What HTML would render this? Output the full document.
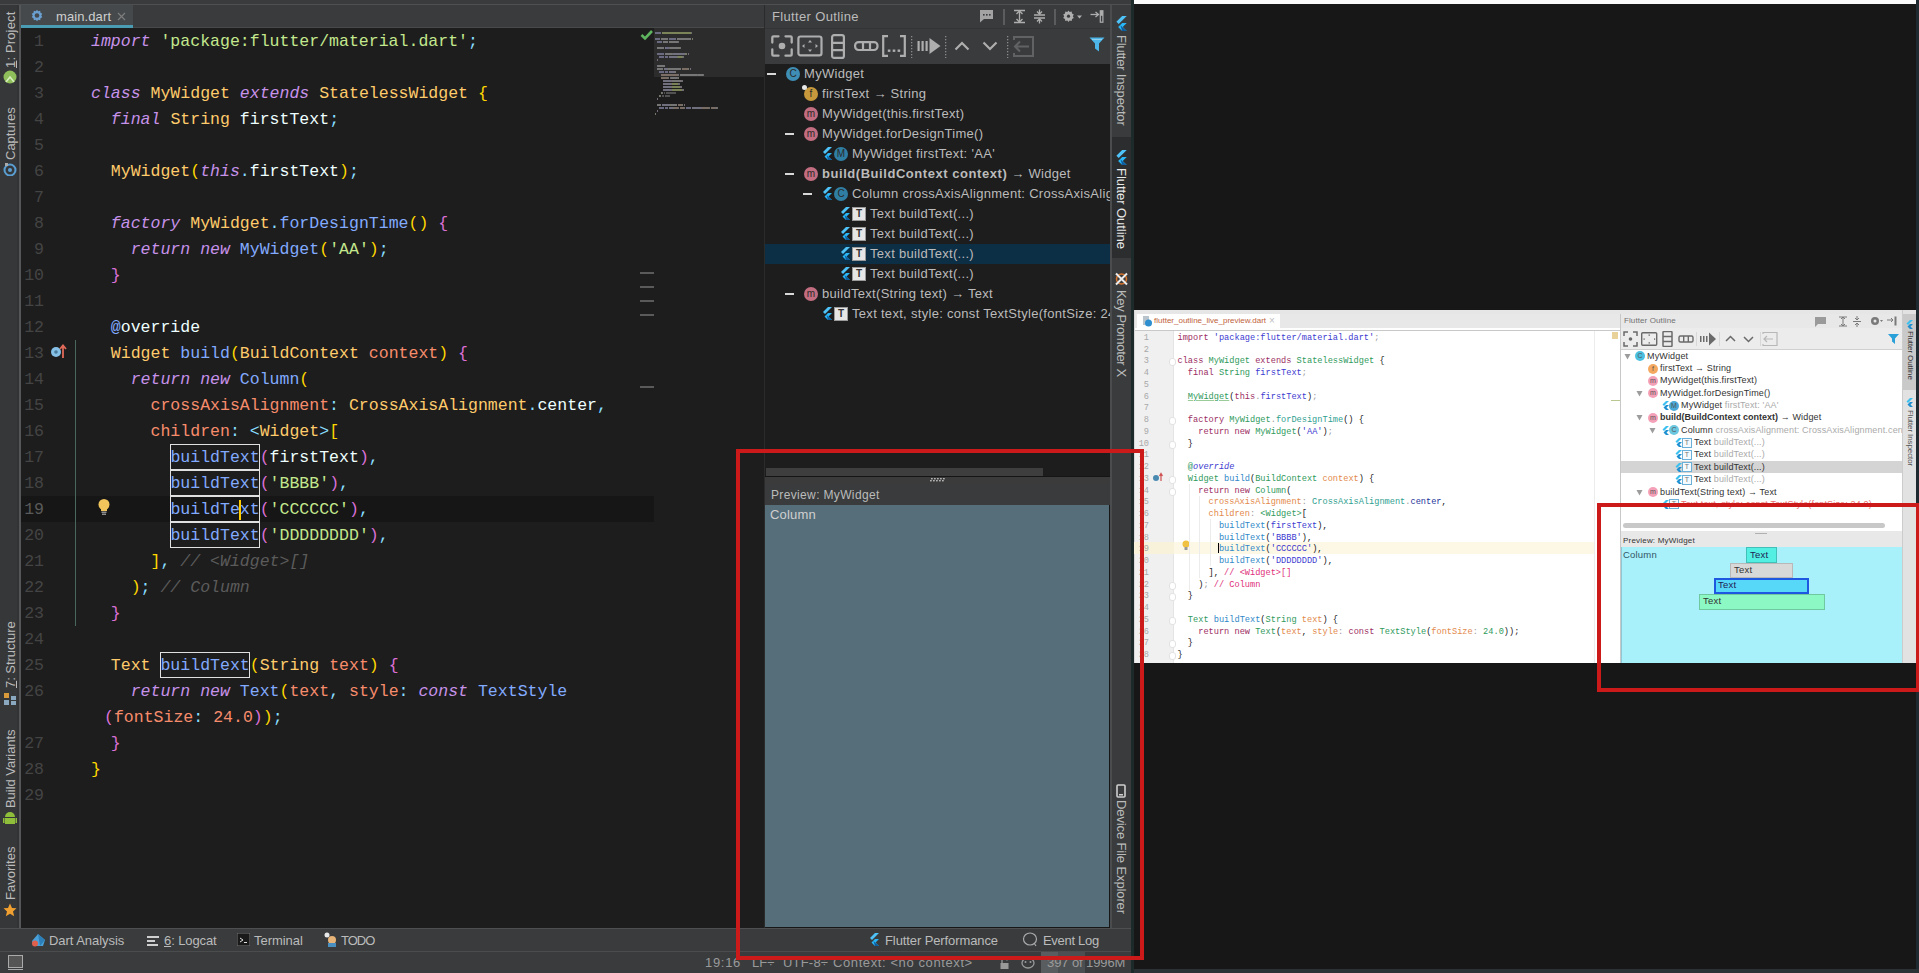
<!DOCTYPE html><html><head><meta charset="utf-8"><style>
*{margin:0;padding:0;box-sizing:border-box}
html,body{width:1919px;height:973px;overflow:hidden;background:#171717}
body{position:relative;font-family:"Liberation Sans",sans-serif}
div,svg{position:absolute}
.t{white-space:pre;line-height:1}
.code{font-family:"Liberation Mono",monospace;font-size:16.55px;line-height:26px;white-space:pre;color:#eeffff}
.k{color:#c792ea;font-style:italic}
.s{color:#c3e88d}
.p{color:#89ddff}
.c{color:#ffcb6b}
.f{color:#82aaff}
.o{color:#f78c6c}
.y{color:#ffd700}
.m{color:#da70d6}
.cm{color:#5b5b5b;font-style:italic}
.ln{font-family:"Liberation Mono",monospace;font-size:16.55px;line-height:26px;color:#444444;text-align:right;white-space:pre}
.ui{font-family:"Liberation Sans",sans-serif;white-space:pre;line-height:1}
</style></head><body><div style="left:0px;top:0px;width:1134px;height:4px;background:#393b3d;"></div>
<div style="left:0px;top:4px;width:1134px;height:1px;background:#4d5052;"></div>
<div style="left:0px;top:5px;width:19px;height:924px;background:#363739;"></div>
<div style="left:17px;top:5px;width:2px;height:924px;background:#323335;"></div>
<div style="left:19px;top:5px;width:2px;height:924px;background:#555657;"></div>
<div style="left:21px;top:5px;width:744px;height:23px;background:#393b3d;"></div>
<div style="left:21px;top:5px;width:112px;height:20px;background:#45494b;"></div>
<div style="left:21px;top:25px;width:112px;height:3px;background:#4a9cb3;"></div>
<div style="left:133px;top:27px;width:631px;height:1px;background:#47494b;"></div>
<div style="left:21px;top:28px;width:744px;height:901px;background:#1d1d1d;"></div>
<div style="left:654px;top:28px;width:110px;height:49px;background:#2c2c2c;"></div>
<div style="left:21px;top:496px;width:633px;height:26px;background:#161616;"></div>
<div class="code" style="left:91px;top:29px"><span class=k>import</span> <span class=s>'package:flutter/material.dart'</span><span class=p>;</span></div>
<div class="code" style="left:91px;top:55px"></div>
<div class="code" style="left:91px;top:81px"><span class=k>class</span> <span class=c>MyWidget</span> <span class=k>extends</span> <span class=c>StatelessWidget</span> <span class=y>{</span></div>
<div class="code" style="left:91px;top:107px">  <span class=k>final</span> <span class=c>String</span> firstText<span class=p>;</span></div>
<div class="code" style="left:91px;top:133px"></div>
<div class="code" style="left:91px;top:159px">  <span class=c>MyWidget</span><span class=y>(</span><span class=k>this</span><span class=p>.</span>firstText<span class=y>)</span><span class=p>;</span></div>
<div class="code" style="left:91px;top:185px"></div>
<div class="code" style="left:91px;top:211px">  <span class=k>factory</span> <span class=c>MyWidget</span><span class=p>.</span><span class=f>forDesignTime</span><span class=y>()</span> <span class=m>{</span></div>
<div class="code" style="left:91px;top:237px">    <span class=k>return</span> <span class=k>new</span> <span class=f>MyWidget</span><span class=y>(</span><span class=s>'AA'</span><span class=y>)</span><span class=p>;</span></div>
<div class="code" style="left:91px;top:263px">  <span class=m>}</span></div>
<div class="code" style="left:91px;top:289px"></div>
<div class="code" style="left:91px;top:315px">  <span class=f>@</span>override</div>
<div class="code" style="left:91px;top:341px">  <span class=c>Widget</span> <span class=f>build</span><span class=y>(</span><span class=c>BuildContext</span> <span class=o>context</span><span class=y>)</span> <span class=m>{</span></div>
<div class="code" style="left:91px;top:367px">    <span class=k>return</span> <span class=k>new</span> <span class=f>Column</span><span class=y>(</span></div>
<div class="code" style="left:91px;top:393px">      <span class=o>crossAxisAlignment</span><span class=p>:</span> <span class=c>CrossAxisAlignment</span><span class=p>.</span>center<span class=p>,</span></div>
<div class="code" style="left:91px;top:419px">      <span class=o>children</span><span class=p>:</span> <span class=p>&lt;</span><span class=c>Widget</span><span class=p>&gt;</span><span class=y>[</span></div>
<div class="code" style="left:91px;top:445px">        <span class=f>buildText</span><span class=m>(</span>firstText<span class=m>)</span><span class=p>,</span></div>
<div class="code" style="left:91px;top:471px">        <span class=f>buildText</span><span class=m>(</span><span class=s>'BBBB'</span><span class=m>)</span><span class=p>,</span></div>
<div class="code" style="left:91px;top:497px">        <span class=f>buildText</span><span class=m>(</span><span class=s>'CCCCCC'</span><span class=m>)</span><span class=p>,</span></div>
<div class="code" style="left:91px;top:523px">        <span class=f>buildText</span><span class=m>(</span><span class=s>'DDDDDDDD'</span><span class=m>)</span><span class=p>,</span></div>
<div class="code" style="left:91px;top:549px">      <span class=y>]</span><span class=p>,</span> <span class=cm>// &lt;Widget&gt;[]</span></div>
<div class="code" style="left:91px;top:575px">    <span class=y>)</span><span class=p>;</span> <span class=cm>// Column</span></div>
<div class="code" style="left:91px;top:601px">  <span class=m>}</span></div>
<div class="code" style="left:91px;top:627px"></div>
<div class="code" style="left:91px;top:653px">  <span class=c>Text</span> <span class=f>buildText</span><span class=y>(</span><span class=c>String</span> <span class=o>text</span><span class=y>)</span> <span class=m>{</span></div>
<div class="code" style="left:91px;top:679px">    <span class=k>return</span> <span class=k>new</span> <span class=f>Text</span><span class=y>(</span><span class=o>text</span><span class=p>,</span> <span class=o>style</span><span class=p>:</span> <span class=k>const</span> <span class=f>TextStyle</span></div>
<div class="code" style="left:104px;top:705px"><span class=m>(</span><span class=o>fontSize</span><span class=p>:</span> <span class=o>24.0</span><span class=m>)</span><span class=y>)</span><span class=p>;</span></div>
<div class="code" style="left:91px;top:731px">  <span class=m>}</span></div>
<div class="code" style="left:91px;top:757px"><span class=y>}</span></div>
<div class="code" style="left:91px;top:783px"></div>
<div class="ln" style="left:21px;width:23px;top:29px">1</div>
<div class="ln" style="left:21px;width:23px;top:55px">2</div>
<div class="ln" style="left:21px;width:23px;top:81px">3</div>
<div class="ln" style="left:21px;width:23px;top:107px">4</div>
<div class="ln" style="left:21px;width:23px;top:133px">5</div>
<div class="ln" style="left:21px;width:23px;top:159px">6</div>
<div class="ln" style="left:21px;width:23px;top:185px">7</div>
<div class="ln" style="left:21px;width:23px;top:211px">8</div>
<div class="ln" style="left:21px;width:23px;top:237px">9</div>
<div class="ln" style="left:21px;width:23px;top:263px">10</div>
<div class="ln" style="left:21px;width:23px;top:289px">11</div>
<div class="ln" style="left:21px;width:23px;top:315px">12</div>
<div class="ln" style="left:21px;width:23px;top:341px">13</div>
<div class="ln" style="left:21px;width:23px;top:367px">14</div>
<div class="ln" style="left:21px;width:23px;top:393px">15</div>
<div class="ln" style="left:21px;width:23px;top:419px">16</div>
<div class="ln" style="left:21px;width:23px;top:445px">17</div>
<div class="ln" style="left:21px;width:23px;top:471px">18</div>
<div class="ln" style="left:21px;width:23px;top:497px;color:#5a5a5a">19</div>
<div class="ln" style="left:21px;width:23px;top:523px">20</div>
<div class="ln" style="left:21px;width:23px;top:549px">21</div>
<div class="ln" style="left:21px;width:23px;top:575px">22</div>
<div class="ln" style="left:21px;width:23px;top:601px">23</div>
<div class="ln" style="left:21px;width:23px;top:627px">24</div>
<div class="ln" style="left:21px;width:23px;top:653px">25</div>
<div class="ln" style="left:21px;width:23px;top:679px">26</div>
<div class="ln" style="left:21px;width:23px;top:705px"></div>
<div class="ln" style="left:21px;width:23px;top:731px">27</div>
<div class="ln" style="left:21px;width:23px;top:757px">28</div>
<div class="ln" style="left:21px;width:23px;top:783px">29</div>
<div style="left:170px;top:444px;width:90px;height:26px;background:transparent;border:1px solid #e0e0e0"></div>
<div style="left:170px;top:470px;width:90px;height:26px;background:transparent;border:1px solid #e0e0e0"></div>
<div style="left:170px;top:496px;width:90px;height:26px;background:transparent;border:1px solid #e0e0e0"></div>
<div style="left:170px;top:522px;width:90px;height:26px;background:transparent;border:1px solid #e0e0e0"></div>
<div style="left:160px;top:652px;width:90px;height:26px;background:transparent;border:1px solid #e0e0e0"></div>
<div style="left:239px;top:500px;width:2px;height:20px;background:#ffcc00;"></div>
<div style="left:75px;top:340px;width:1px;height:286px;background:#4a675f;"></div>
<svg style="left:97px;top:498px" width="14" height="18" viewBox="0 0 14 18"><circle cx="7" cy="6.5" r="5.5" fill="#f2c55c"/><rect x="4" y="10" width="6" height="3" fill="#f2c55c"/><rect x="4.5" y="13.5" width="5" height="1.5" fill="#8c8c8c"/><rect x="5" y="15.5" width="4" height="1.5" fill="#8c8c8c"/></svg>
<svg style="left:50px;top:343px" width="18" height="16" viewBox="0 0 18 16"><circle cx="6" cy="9" r="5" fill="#86c0e6"/><circle cx="6" cy="9" r="1.8" fill="#4a7a9a"/><path d="M13 15 V3 M10 6 L13 2.5 L16 6" stroke="#e06a5a" stroke-width="1.8" fill="none"/></svg>
<svg style="left:640px;top:29px" width="14" height="12" viewBox="0 0 14 12"><path d="M1.5 6 L5 9.5 L12 2" stroke="#5eb35e" stroke-width="2.6" fill="none"/></svg>
<div style="left:640px;top:272px;width:14px;height:2px;background:#5a5a5a;"></div>
<div style="left:640px;top:286px;width:14px;height:2px;background:#5a5a5a;"></div>
<div style="left:640px;top:300px;width:14px;height:2px;background:#5a5a5a;"></div>
<div style="left:640px;top:314px;width:14px;height:2px;background:#5a5a5a;"></div>
<div style="left:640px;top:386px;width:14px;height:2px;background:#5a5a5a;"></div>
<div style="left:655.0px;top:32px;width:5.699999999999999px;height:1.6px;background:#767690;opacity:.85"></div>
<div style="left:661.65px;top:32px;width:29.45px;height:1.6px;background:#8a9462;opacity:.85"></div>
<div style="left:691.1px;top:32px;width:0.95px;height:1.6px;background:#7a7a7a;opacity:.85"></div>
<div style="left:655.0px;top:38px;width:4.75px;height:1.6px;background:#767690;opacity:.85"></div>
<div style="left:660.7px;top:38px;width:7.6px;height:1.6px;background:#858585;opacity:.85"></div>
<div style="left:669.25px;top:38px;width:6.6499999999999995px;height:1.6px;background:#767690;opacity:.85"></div>
<div style="left:676.85px;top:38px;width:14.25px;height:1.6px;background:#858585;opacity:.85"></div>
<div style="left:692.05px;top:38px;width:0.95px;height:1.6px;background:#858575;opacity:.85"></div>
<div style="left:656.9px;top:41px;width:4.75px;height:1.6px;background:#767690;opacity:.85"></div>
<div style="left:662.6px;top:41px;width:5.699999999999999px;height:1.6px;background:#858585;opacity:.85"></div>
<div style="left:669.25px;top:41px;width:8.549999999999999px;height:1.6px;background:#858585;opacity:.85"></div>
<div style="left:677.8px;top:41px;width:0.95px;height:1.6px;background:#7a7a7a;opacity:.85"></div>
<div style="left:656.9px;top:47px;width:7.6px;height:1.6px;background:#858585;opacity:.85"></div>
<div style="left:664.5px;top:47px;width:0.95px;height:1.6px;background:#858575;opacity:.85"></div>
<div style="left:665.45px;top:47px;width:3.8px;height:1.6px;background:#767690;opacity:.85"></div>
<div style="left:669.25px;top:47px;width:0.95px;height:1.6px;background:#7a7a7a;opacity:.85"></div>
<div style="left:670.2px;top:47px;width:8.549999999999999px;height:1.6px;background:#858585;opacity:.85"></div>
<div style="left:678.75px;top:47px;width:0.95px;height:1.6px;background:#858575;opacity:.85"></div>
<div style="left:679.7px;top:47px;width:0.95px;height:1.6px;background:#7a7a7a;opacity:.85"></div>
<div style="left:656.9px;top:53px;width:6.6499999999999995px;height:1.6px;background:#767690;opacity:.85"></div>
<div style="left:664.5px;top:53px;width:7.6px;height:1.6px;background:#858585;opacity:.85"></div>
<div style="left:672.1px;top:53px;width:0.95px;height:1.6px;background:#7a7a7a;opacity:.85"></div>
<div style="left:673.05px;top:53px;width:12.35px;height:1.6px;background:#7e7e8e;opacity:.85"></div>
<div style="left:685.4px;top:53px;width:1.9px;height:1.6px;background:#858575;opacity:.85"></div>
<div style="left:688.25px;top:53px;width:0.95px;height:1.6px;background:#857585;opacity:.85"></div>
<div style="left:658.8px;top:56px;width:5.699999999999999px;height:1.6px;background:#767690;opacity:.85"></div>
<div style="left:665.45px;top:56px;width:2.8499999999999996px;height:1.6px;background:#767690;opacity:.85"></div>
<div style="left:669.25px;top:56px;width:7.6px;height:1.6px;background:#7e7e8e;opacity:.85"></div>
<div style="left:676.85px;top:56px;width:0.95px;height:1.6px;background:#858575;opacity:.85"></div>
<div style="left:677.8px;top:56px;width:3.8px;height:1.6px;background:#8a9462;opacity:.85"></div>
<div style="left:681.6px;top:56px;width:0.95px;height:1.6px;background:#858575;opacity:.85"></div>
<div style="left:682.55px;top:56px;width:0.95px;height:1.6px;background:#7a7a7a;opacity:.85"></div>
<div style="left:656.9px;top:59px;width:0.95px;height:1.6px;background:#857585;opacity:.85"></div>
<div style="left:656.9px;top:65px;width:0.95px;height:1.6px;background:#7e7e8e;opacity:.85"></div>
<div style="left:657.85px;top:65px;width:7.6px;height:1.6px;background:#858585;opacity:.85"></div>
<div style="left:656.9px;top:68px;width:5.699999999999999px;height:1.6px;background:#858585;opacity:.85"></div>
<div style="left:663.55px;top:68px;width:4.75px;height:1.6px;background:#7e7e8e;opacity:.85"></div>
<div style="left:668.3px;top:68px;width:0.95px;height:1.6px;background:#858575;opacity:.85"></div>
<div style="left:669.25px;top:68px;width:11.399999999999999px;height:1.6px;background:#858585;opacity:.85"></div>
<div style="left:681.6px;top:68px;width:6.6499999999999995px;height:1.6px;background:#8a7a70;opacity:.85"></div>
<div style="left:688.25px;top:68px;width:0.95px;height:1.6px;background:#858575;opacity:.85"></div>
<div style="left:690.15px;top:68px;width:0.95px;height:1.6px;background:#857585;opacity:.85"></div>
<div style="left:658.8px;top:71px;width:5.699999999999999px;height:1.6px;background:#767690;opacity:.85"></div>
<div style="left:665.45px;top:71px;width:2.8499999999999996px;height:1.6px;background:#767690;opacity:.85"></div>
<div style="left:669.25px;top:71px;width:5.699999999999999px;height:1.6px;background:#7e7e8e;opacity:.85"></div>
<div style="left:674.95px;top:71px;width:0.95px;height:1.6px;background:#858575;opacity:.85"></div>
<div style="left:660.7px;top:74px;width:17.099999999999998px;height:1.6px;background:#8a7a70;opacity:.85"></div>
<div style="left:677.8px;top:74px;width:0.95px;height:1.6px;background:#7a7a7a;opacity:.85"></div>
<div style="left:679.7px;top:74px;width:17.099999999999998px;height:1.6px;background:#858585;opacity:.85"></div>
<div style="left:696.8px;top:74px;width:0.95px;height:1.6px;background:#7a7a7a;opacity:.85"></div>
<div style="left:697.75px;top:74px;width:5.699999999999999px;height:1.6px;background:#858585;opacity:.85"></div>
<div style="left:703.45px;top:74px;width:0.95px;height:1.6px;background:#7a7a7a;opacity:.85"></div>
<div style="left:660.7px;top:77px;width:7.6px;height:1.6px;background:#8a7a70;opacity:.85"></div>
<div style="left:668.3px;top:77px;width:0.95px;height:1.6px;background:#7a7a7a;opacity:.85"></div>
<div style="left:670.2px;top:77px;width:0.95px;height:1.6px;background:#7a7a7a;opacity:.85"></div>
<div style="left:671.15px;top:77px;width:5.699999999999999px;height:1.6px;background:#858585;opacity:.85"></div>
<div style="left:676.85px;top:77px;width:0.95px;height:1.6px;background:#7a7a7a;opacity:.85"></div>
<div style="left:677.8px;top:77px;width:0.95px;height:1.6px;background:#858575;opacity:.85"></div>
<div style="left:662.6px;top:80px;width:8.549999999999999px;height:1.6px;background:#7e7e8e;opacity:.85"></div>
<div style="left:671.15px;top:80px;width:0.95px;height:1.6px;background:#857585;opacity:.85"></div>
<div style="left:672.1px;top:80px;width:8.549999999999999px;height:1.6px;background:#858585;opacity:.85"></div>
<div style="left:680.65px;top:80px;width:0.95px;height:1.6px;background:#857585;opacity:.85"></div>
<div style="left:681.6px;top:80px;width:0.95px;height:1.6px;background:#7a7a7a;opacity:.85"></div>
<div style="left:662.6px;top:83px;width:8.549999999999999px;height:1.6px;background:#7e7e8e;opacity:.85"></div>
<div style="left:671.15px;top:83px;width:0.95px;height:1.6px;background:#857585;opacity:.85"></div>
<div style="left:672.1px;top:83px;width:5.699999999999999px;height:1.6px;background:#8a9462;opacity:.85"></div>
<div style="left:677.8px;top:83px;width:0.95px;height:1.6px;background:#857585;opacity:.85"></div>
<div style="left:678.75px;top:83px;width:0.95px;height:1.6px;background:#7a7a7a;opacity:.85"></div>
<div style="left:662.6px;top:86px;width:8.549999999999999px;height:1.6px;background:#7e7e8e;opacity:.85"></div>
<div style="left:671.15px;top:86px;width:0.95px;height:1.6px;background:#857585;opacity:.85"></div>
<div style="left:672.1px;top:86px;width:7.6px;height:1.6px;background:#8a9462;opacity:.85"></div>
<div style="left:679.7px;top:86px;width:0.95px;height:1.6px;background:#857585;opacity:.85"></div>
<div style="left:680.65px;top:86px;width:0.95px;height:1.6px;background:#7a7a7a;opacity:.85"></div>
<div style="left:662.6px;top:89px;width:8.549999999999999px;height:1.6px;background:#7e7e8e;opacity:.85"></div>
<div style="left:671.15px;top:89px;width:0.95px;height:1.6px;background:#857585;opacity:.85"></div>
<div style="left:672.1px;top:89px;width:9.5px;height:1.6px;background:#8a9462;opacity:.85"></div>
<div style="left:681.6px;top:89px;width:0.95px;height:1.6px;background:#857585;opacity:.85"></div>
<div style="left:682.55px;top:89px;width:0.95px;height:1.6px;background:#7a7a7a;opacity:.85"></div>
<div style="left:660.7px;top:92px;width:0.95px;height:1.6px;background:#858575;opacity:.85"></div>
<div style="left:661.65px;top:92px;width:0.95px;height:1.6px;background:#7a7a7a;opacity:.85"></div>
<div style="left:663.55px;top:92px;width:1.9px;height:1.6px;background:#5a5a5a;opacity:.85"></div>
<div style="left:666.4px;top:92px;width:9.5px;height:1.6px;background:#5a5a5a;opacity:.85"></div>
<div style="left:658.8px;top:95px;width:0.95px;height:1.6px;background:#858575;opacity:.85"></div>
<div style="left:659.75px;top:95px;width:0.95px;height:1.6px;background:#7a7a7a;opacity:.85"></div>
<div style="left:661.65px;top:95px;width:1.9px;height:1.6px;background:#5a5a5a;opacity:.85"></div>
<div style="left:664.5px;top:95px;width:5.699999999999999px;height:1.6px;background:#5a5a5a;opacity:.85"></div>
<div style="left:656.9px;top:98px;width:0.95px;height:1.6px;background:#857585;opacity:.85"></div>
<div style="left:656.9px;top:104px;width:3.8px;height:1.6px;background:#858585;opacity:.85"></div>
<div style="left:661.65px;top:104px;width:8.549999999999999px;height:1.6px;background:#7e7e8e;opacity:.85"></div>
<div style="left:670.2px;top:104px;width:0.95px;height:1.6px;background:#858575;opacity:.85"></div>
<div style="left:671.15px;top:104px;width:5.699999999999999px;height:1.6px;background:#858585;opacity:.85"></div>
<div style="left:677.8px;top:104px;width:3.8px;height:1.6px;background:#8a7a70;opacity:.85"></div>
<div style="left:681.6px;top:104px;width:0.95px;height:1.6px;background:#858575;opacity:.85"></div>
<div style="left:683.5px;top:104px;width:0.95px;height:1.6px;background:#857585;opacity:.85"></div>
<div style="left:658.8px;top:107px;width:5.699999999999999px;height:1.6px;background:#767690;opacity:.85"></div>
<div style="left:665.45px;top:107px;width:2.8499999999999996px;height:1.6px;background:#767690;opacity:.85"></div>
<div style="left:669.25px;top:107px;width:3.8px;height:1.6px;background:#7e7e8e;opacity:.85"></div>
<div style="left:673.05px;top:107px;width:0.95px;height:1.6px;background:#858575;opacity:.85"></div>
<div style="left:674.0px;top:107px;width:3.8px;height:1.6px;background:#8a7a70;opacity:.85"></div>
<div style="left:677.8px;top:107px;width:0.95px;height:1.6px;background:#7a7a7a;opacity:.85"></div>
<div style="left:679.7px;top:107px;width:4.75px;height:1.6px;background:#8a7a70;opacity:.85"></div>
<div style="left:684.45px;top:107px;width:0.95px;height:1.6px;background:#7a7a7a;opacity:.85"></div>
<div style="left:686.35px;top:107px;width:4.75px;height:1.6px;background:#767690;opacity:.85"></div>
<div style="left:692.05px;top:107px;width:8.549999999999999px;height:1.6px;background:#7e7e8e;opacity:.85"></div>
<div style="left:700.6px;top:107px;width:0.95px;height:1.6px;background:#857585;opacity:.85"></div>
<div style="left:701.55px;top:107px;width:7.6px;height:1.6px;background:#8a7a70;opacity:.85"></div>
<div style="left:709.15px;top:107px;width:0.95px;height:1.6px;background:#7a7a7a;opacity:.85"></div>
<div style="left:711.05px;top:107px;width:3.8px;height:1.6px;background:#8a7a70;opacity:.85"></div>
<div style="left:714.85px;top:107px;width:0.95px;height:1.6px;background:#857585;opacity:.85"></div>
<div style="left:715.8px;top:107px;width:0.95px;height:1.6px;background:#858575;opacity:.85"></div>
<div style="left:716.75px;top:107px;width:0.95px;height:1.6px;background:#7a7a7a;opacity:.85"></div>
<div style="left:656.9px;top:110px;width:0.95px;height:1.6px;background:#857585;opacity:.85"></div>
<div style="left:655.0px;top:113px;width:0.95px;height:1.6px;background:#858575;opacity:.85"></div>
<div style="left:764px;top:5px;width:1px;height:924px;background:#2b2b2b;"></div>
<div style="left:765px;top:5px;width:345px;height:23px;background:#393b3d;"></div>
<div style="left:765px;top:28px;width:345px;height:1px;background:#323436;"></div>
<div style="left:765px;top:29px;width:345px;height:35px;background:#393b3d;"></div>
<div style="left:765px;top:64px;width:345px;height:404px;background:#1d1d1d;"></div>
<div class="t " style="left:772px;top:10px;font-size:13px;color:#bbbbbb;letter-spacing:0.35px">Flutter Outline</div>
<div style="left:765px;top:244px;width:345px;height:20px;background:#0d2f46;"></div>
<div style="left:767px;top:73px;width:9px;height:2px;background:#d8d8d8;"></div>
<div style="left:786px;top:67px;width:14px;height:14px;border-radius:7px;background:#3e8eb5;color:#2b2b2b;font:10px 'Liberation Sans';line-height:14px;text-align:center">C</div>
<div class="t " style="left:804px;top:67px;font-size:13px;color:#bbbbbb;letter-spacing:0.3px">MyWidget</div>
<div style="left:804px;top:87px;width:14px;height:14px;border-radius:7px;background:#c8993c;color:#2b2b2b;font:10px 'Liberation Sans';line-height:14px;text-align:center">f</div>
<div style="left:802px;top:85px;width:5px;height:5px;background:#e8e8e8;border-radius:3px"></div>
<div class="t " style="left:822px;top:87px;font-size:13px;color:#bbbbbb;letter-spacing:0.3px">firstText → String</div>
<div style="left:804px;top:107px;width:14px;height:14px;border-radius:7px;background:#c26d80;color:#2b2b2b;font:10px 'Liberation Sans';line-height:14px;text-align:center">m</div>
<div class="t " style="left:822px;top:107px;font-size:13px;color:#bbbbbb;letter-spacing:0.3px">MyWidget(this.firstText)</div>
<div style="left:785px;top:133px;width:9px;height:2px;background:#d8d8d8;"></div>
<div style="left:804px;top:127px;width:14px;height:14px;border-radius:7px;background:#c26d80;color:#2b2b2b;font:10px 'Liberation Sans';line-height:14px;text-align:center">m</div>
<div class="t " style="left:822px;top:127px;font-size:13px;color:#bbbbbb;letter-spacing:0.3px">MyWidget.forDesignTime()</div>
<svg style="left:822px;top:147px" width="10" height="13" viewBox="0 0 10 13"><path d="M6 0 H10 L3 7 L1 5 Z" fill="#4fc3f7"/><path d="M6 6 H10 L6.5 9.5 L10 13 H6 L2.5 9.5 Z" fill="#29b6f6"/><path d="M4.5 8 L6.5 10 L10 13 H6 Z" fill="#0d5c9e"/></svg>
<div style="left:834px;top:147px;width:14px;height:14px;border-radius:7px;background:#2f7fa5;color:#2b2b2b;font:10px 'Liberation Sans';line-height:14px;text-align:center">M</div>
<div class="t " style="left:852px;top:147px;font-size:13px;color:#bbbbbb;letter-spacing:0.3px">MyWidget firstText: 'AA'</div>
<div style="left:785px;top:173px;width:9px;height:2px;background:#d8d8d8;"></div>
<div style="left:804px;top:167px;width:14px;height:14px;border-radius:7px;background:#c26d80;color:#2b2b2b;font:10px 'Liberation Sans';line-height:14px;text-align:center">m</div>
<div class="t " style="left:822px;top:167px;font-size:13px;color:#bbbbbb;letter-spacing:0.3px"><b style="letter-spacing:0.55px">build(BuildContext context)</b> → Widget</div>
<div style="left:803px;top:193px;width:9px;height:2px;background:#d8d8d8;"></div>
<svg style="left:822px;top:187px" width="10" height="13" viewBox="0 0 10 13"><path d="M6 0 H10 L3 7 L1 5 Z" fill="#4fc3f7"/><path d="M6 6 H10 L6.5 9.5 L10 13 H6 L2.5 9.5 Z" fill="#29b6f6"/><path d="M4.5 8 L6.5 10 L10 13 H6 Z" fill="#0d5c9e"/></svg>
<div style="left:834px;top:187px;width:14px;height:14px;border-radius:7px;background:#2f7fa5;color:#2b2b2b;font:10px 'Liberation Sans';line-height:14px;text-align:center">C</div>
<div class="t " style="left:852px;top:187px;font-size:13px;color:#bbbbbb;letter-spacing:0.3px">Column crossAxisAlignment: CrossAxisAlignment.center</div>
<svg style="left:840px;top:207px" width="10" height="13" viewBox="0 0 10 13"><path d="M6 0 H10 L3 7 L1 5 Z" fill="#4fc3f7"/><path d="M6 6 H10 L6.5 9.5 L10 13 H6 L2.5 9.5 Z" fill="#29b6f6"/><path d="M4.5 8 L6.5 10 L10 13 H6 Z" fill="#0d5c9e"/></svg>
<div style="left:852px;top:207px;width:14px;height:14px;background:#e6e6e6;border:1px solid #9a9a9a;color:#333;font:bold 10px 'Liberation Sans';line-height:12px;text-align:center">T</div>
<div class="t " style="left:870px;top:207px;font-size:13px;color:#bbbbbb;letter-spacing:0.3px">Text buildText(...)</div>
<svg style="left:840px;top:227px" width="10" height="13" viewBox="0 0 10 13"><path d="M6 0 H10 L3 7 L1 5 Z" fill="#4fc3f7"/><path d="M6 6 H10 L6.5 9.5 L10 13 H6 L2.5 9.5 Z" fill="#29b6f6"/><path d="M4.5 8 L6.5 10 L10 13 H6 Z" fill="#0d5c9e"/></svg>
<div style="left:852px;top:227px;width:14px;height:14px;background:#e6e6e6;border:1px solid #9a9a9a;color:#333;font:bold 10px 'Liberation Sans';line-height:12px;text-align:center">T</div>
<div class="t " style="left:870px;top:227px;font-size:13px;color:#bbbbbb;letter-spacing:0.3px">Text buildText(...)</div>
<svg style="left:840px;top:247px" width="10" height="13" viewBox="0 0 10 13"><path d="M6 0 H10 L3 7 L1 5 Z" fill="#4fc3f7"/><path d="M6 6 H10 L6.5 9.5 L10 13 H6 L2.5 9.5 Z" fill="#29b6f6"/><path d="M4.5 8 L6.5 10 L10 13 H6 Z" fill="#0d5c9e"/></svg>
<div style="left:852px;top:247px;width:14px;height:14px;background:#e6e6e6;border:1px solid #9a9a9a;color:#333;font:bold 10px 'Liberation Sans';line-height:12px;text-align:center">T</div>
<div class="t " style="left:870px;top:247px;font-size:13px;color:#bbbbbb;letter-spacing:0.3px">Text buildText(...)</div>
<svg style="left:840px;top:267px" width="10" height="13" viewBox="0 0 10 13"><path d="M6 0 H10 L3 7 L1 5 Z" fill="#4fc3f7"/><path d="M6 6 H10 L6.5 9.5 L10 13 H6 L2.5 9.5 Z" fill="#29b6f6"/><path d="M4.5 8 L6.5 10 L10 13 H6 Z" fill="#0d5c9e"/></svg>
<div style="left:852px;top:267px;width:14px;height:14px;background:#e6e6e6;border:1px solid #9a9a9a;color:#333;font:bold 10px 'Liberation Sans';line-height:12px;text-align:center">T</div>
<div class="t " style="left:870px;top:267px;font-size:13px;color:#bbbbbb;letter-spacing:0.3px">Text buildText(...)</div>
<div style="left:785px;top:293px;width:9px;height:2px;background:#d8d8d8;"></div>
<div style="left:804px;top:287px;width:14px;height:14px;border-radius:7px;background:#c26d80;color:#2b2b2b;font:10px 'Liberation Sans';line-height:14px;text-align:center">m</div>
<div class="t " style="left:822px;top:287px;font-size:13px;color:#bbbbbb;letter-spacing:0.3px">buildText(String text) → Text</div>
<svg style="left:822px;top:307px" width="10" height="13" viewBox="0 0 10 13"><path d="M6 0 H10 L3 7 L1 5 Z" fill="#4fc3f7"/><path d="M6 6 H10 L6.5 9.5 L10 13 H6 L2.5 9.5 Z" fill="#29b6f6"/><path d="M4.5 8 L6.5 10 L10 13 H6 Z" fill="#0d5c9e"/></svg>
<div style="left:834px;top:307px;width:14px;height:14px;background:#e6e6e6;border:1px solid #9a9a9a;color:#333;font:bold 10px 'Liberation Sans';line-height:12px;text-align:center">T</div>
<div class="t " style="left:852px;top:307px;font-size:13px;color:#bbbbbb;letter-spacing:0.3px">Text text, style: const TextStyle(fontSize: 24.0)</div>
<div style="left:765px;top:468px;width:345px;height:9px;background:#1d1d1d;"></div>
<div style="left:766px;top:468px;width:277px;height:8px;background:#3e3e3e;"></div>
<div style="left:765px;top:477px;width:345px;height:7px;background:#3b3b3b;"></div>
<div style="left:765px;top:476px;width:345px;height:1px;background:#151515;"></div>
<div style="left:765px;top:484px;width:345px;height:21px;background:#393b3d;"></div>
<div class="t " style="left:771px;top:489px;font-size:12px;color:#bbbbbb;letter-spacing:0.35px">Preview: MyWidget</div>
<div style="left:765px;top:505px;width:344px;height:422px;background:#566e7a;"></div>
<div class="t " style="left:770px;top:508px;font-size:13px;color:#d0d0d0;letter-spacing:0.2px">Column</div>
<div style="left:1110px;top:5px;width:2px;height:924px;background:#4a4c4e;"></div>
<div style="left:1112px;top:5px;width:19px;height:924px;background:#393b3d;"></div>
<div style="left:1131px;top:0px;width:3px;height:973px;background:#1d2a2a;"></div>
<div style="left:1112px;top:137px;width:19px;height:121px;background:#2c2d2f;"></div>
<svg style="left:1115px;top:16px" width="12" height="15" viewBox="0 0 10 13"><path d="M6 0 H10 L3 7 L1 5 Z" fill="#4fc3f7"/><path d="M6 6 H10 L6.5 9.5 L10 13 H6 L2.5 9.5 Z" fill="#29b6f6"/><path d="M4.5 8 L6.5 10 L10 13 H6 Z" fill="#0d5c9e"/></svg>
<div class="t" style="left:1128px;top:35px;font-size:13px;color:#bbbbbb;letter-spacing:-0.2px;transform-origin:0 0;transform:rotate(90deg)">Flutter Inspector</div>
<svg style="left:1115px;top:150px" width="12" height="15" viewBox="0 0 10 13"><path d="M6 0 H10 L3 7 L1 5 Z" fill="#4fc3f7"/><path d="M6 6 H10 L6.5 9.5 L10 13 H6 L2.5 9.5 Z" fill="#29b6f6"/><path d="M4.5 8 L6.5 10 L10 13 H6 Z" fill="#0d5c9e"/></svg>
<div class="t" style="left:1128px;top:168px;font-size:13px;color:#e8e8e8;letter-spacing:-0.05px;transform-origin:0 0;transform:rotate(90deg)">Flutter Outline</div>
<svg style="left:1114px;top:271px" width="15" height="15" viewBox="0 0 15 15"><circle cx="7.5" cy="8" r="5" fill="none" stroke="#d8742c" stroke-width="1.5"/><path d="M2 2.5 L13 13.5 M13 2.5 L2 13.5" stroke="#ececec" stroke-width="2"/></svg>
<div class="t" style="left:1128px;top:290px;font-size:13px;color:#bbbbbb;letter-spacing:-0.35px;transform-origin:0 0;transform:rotate(90deg)">Key Promoter X</div>
<svg style="left:1115px;top:784px" width="12" height="14" viewBox="0 0 12 14"><rect x="2" y="1" width="8" height="12" rx="1" fill="none" stroke="#cfcfcf" stroke-width="1.6"/><rect x="4" y="10" width="4" height="1.5" fill="#cfcfcf"/></svg>
<div class="t" style="left:1128px;top:800px;font-size:13px;color:#bbbbbb;letter-spacing:-0.12px;transform-origin:0 0;transform:rotate(90deg)">Device File Explorer</div>
<div style="left:0px;top:928px;width:1131px;height:1px;background:#4d4f51;"></div>
<div style="left:0px;top:929px;width:1131px;height:22px;background:#393b3d;"></div>
<div style="left:0px;top:951px;width:1131px;height:1px;background:#4a4c4e;"></div>
<div style="left:0px;top:952px;width:1131px;height:21px;background:#393b3d;"></div>
<svg style="left:31px;top:933px" width="15" height="14" viewBox="0 0 15 14"><path d="M7 1 L14 7 L12 13 H3 L1 8 Z" fill="#4aa0d8"/><path d="M7 1 L14 7 L9 13 Z" fill="#2c7fb8"/><circle cx="4" cy="10.5" r="3" fill="#e0604c"/></svg>
<div class="t " style="left:49px;top:934px;font-size:13px;color:#bbbbbb;letter-spacing:-0.05px">Dart Analysis</div>
<svg style="left:147px;top:935px" width="13" height="11" viewBox="0 0 13 11"><rect x="0" y="1" width="12" height="2" fill="#cfcfcf"/><rect x="0" y="5" width="8" height="2" fill="#cfcfcf"/><rect x="0" y="9" width="11" height="2" fill="#cfcfcf"/></svg>
<div class="t " style="left:164px;top:934px;font-size:13px;color:#bbbbbb;letter-spacing:-0.1px"><u>6</u>: Logcat</div>
<svg style="left:237px;top:933px" width="13" height="13" viewBox="0 0 13 13"><rect x="0" y="0" width="13" height="13" fill="#1a1a1a" stroke="#777" stroke-width="1"/><path d="M3 5 L6 7 L3 9" stroke="#ddd" fill="none"/><rect x="7" y="9" width="3" height="1" fill="#ddd"/></svg>
<div class="t " style="left:254px;top:934px;font-size:13px;color:#bbbbbb;letter-spacing:-0.05px">Terminal</div>
<svg style="left:324px;top:932px" width="14" height="15" viewBox="0 0 14 15"><circle cx="8" cy="8" r="4" fill="#e8b478"/><rect x="4" y="11" width="8" height="4" fill="#4a90c0"/><circle cx="3" cy="3" r="2.5" fill="#e8e8e8"/></svg>
<div class="t " style="left:341px;top:934px;font-size:13px;color:#bbbbbb;letter-spacing:-1px">TODO</div>
<svg style="left:869px;top:933px" width="10" height="13" viewBox="0 0 10 13"><path d="M6 0 H10 L3 7 L1 5 Z" fill="#4fc3f7"/><path d="M6 6 H10 L6.5 9.5 L10 13 H6 L2.5 9.5 Z" fill="#29b6f6"/><path d="M4.5 8 L6.5 10 L10 13 H6 Z" fill="#0d5c9e"/></svg>
<div class="t " style="left:885px;top:934px;font-size:13px;color:#bbbbbb;letter-spacing:-0.1px">Flutter Performance</div>
<svg style="left:1022px;top:932px" width="16" height="15" viewBox="0 0 16 15"><ellipse cx="8" cy="7" rx="6.5" ry="6" fill="none" stroke="#aaa" stroke-width="1.2"/><path d="M12 11 L14 14" stroke="#aaa" stroke-width="1.2"/></svg>
<div class="t " style="left:1043px;top:934px;font-size:13px;color:#bbbbbb;letter-spacing:-0.3px">Event Log</div>
<div style="left:8px;top:955px;width:15px;height:13px;background:#555;border:1.5px solid #aaa"></div>
<div style="left:8px;top:969px;width:15px;height:1px;background:#aaa;"></div>
<div style="left:1041px;top:952px;width:17px;height:21px;background:#5a5d5f;"></div>
<div style="left:1058px;top:952px;width:27px;height:21px;background:#4c4f51;"></div>
<div class="t " style="left:705px;top:956px;font-size:13px;color:#9a9a9a;letter-spacing:0.7px">19:16</div>
<div class="t " style="left:752px;top:956px;font-size:13px;color:#9a9a9a;letter-spacing:0px">LF÷</div>
<div class="t " style="left:783px;top:956px;font-size:13px;color:#9a9a9a;letter-spacing:0.2px">UTF-8÷</div>
<div class="t " style="left:833px;top:956px;font-size:13px;color:#9a9a9a;letter-spacing:0.6px">Context: &lt;no context&gt;</div>
<svg style="left:999px;top:957px" width="11" height="12" viewBox="0 0 11 12"><path d="M3 6 V3.5 A2.5 2.5 0 0 1 8 3.5" stroke="#999" fill="none" stroke-width="1.3"/><rect x="1.5" y="6" width="8" height="6" fill="#999"/></svg>
<svg style="left:1021px;top:956px" width="14" height="13" viewBox="0 0 14 13"><ellipse cx="7" cy="7" rx="6" ry="5" fill="none" stroke="#999" stroke-width="1.3"/><circle cx="4.5" cy="6" r="1" fill="#999"/><circle cx="9.5" cy="6" r="1" fill="#999"/></svg>
<div class="t " style="left:1047px;top:956px;font-size:13px;color:#9a9a9a;letter-spacing:-0.1px">397 of 1996M</div>
<div class="t" style="left:4px;top:68px;font-size:13px;color:#bbbbbb;letter-spacing:0.15px;transform-origin:0 0;transform:rotate(-90deg)"><u>1</u>: Project</div>
<svg style="left:3px;top:70px" width="14" height="14" viewBox="0 0 14 14"><circle cx="7" cy="7" r="6.5" fill="#8fbf5a"/><path d="M3 12 L7 7 L11 12" stroke="#d8f0c0" stroke-width="1.5" fill="none"/></svg>
<div class="t" style="left:4px;top:160px;font-size:13px;color:#bbbbbb;letter-spacing:0px;transform-origin:0 0;transform:rotate(-90deg)">Captures</div>
<svg style="left:3px;top:162px" width="14" height="14" viewBox="0 0 14 14"><circle cx="7" cy="8" r="5.5" fill="none" stroke="#5a9fd4" stroke-width="2"/><circle cx="7" cy="8" r="2" fill="#5a9fd4"/><rect x="2" y="1" width="3" height="3" fill="#aaa"/></svg>
<div class="t" style="left:4px;top:688px;font-size:13px;color:#bbbbbb;letter-spacing:-0.05px;transform-origin:0 0;transform:rotate(-90deg)"><u>7</u>: Structure</div>
<svg style="left:3px;top:692px" width="14" height="14" viewBox="0 0 14 14"><rect x="1" y="1" width="5" height="5" fill="#d89a3a"/><rect x="8" y="4" width="5" height="4" fill="#8aa8c0"/><rect x="1" y="8" width="5" height="5" fill="#8aa8c0"/><rect x="8" y="9" width="5" height="4" fill="#8aa8c0"/></svg>
<div class="t" style="left:4px;top:808px;font-size:13px;color:#bbbbbb;letter-spacing:-0.05px;transform-origin:0 0;transform:rotate(-90deg)">Build Variants</div>
<svg style="left:3px;top:811px" width="14" height="15" viewBox="0 0 14 15"><path d="M2 6 A5 5 0 0 1 12 6 Z" fill="#8fbf3a"/><rect x="2" y="7" width="10" height="6" fill="#8fbf3a"/><rect x="0" y="7" width="1.5" height="5" fill="#8fbf3a"/><rect x="12.5" y="7" width="1.5" height="5" fill="#8fbf3a"/></svg>
<div class="t" style="left:4px;top:900px;font-size:13px;color:#bbbbbb;letter-spacing:0px;transform-origin:0 0;transform:rotate(-90deg)">Favorites</div>
<svg style="left:3px;top:903px" width="14" height="14" viewBox="0 0 14 14"><path d="M7 0.5 L9 5 L13.5 5.3 L10 8.5 L11.2 13.3 L7 10.7 L2.8 13.3 L4 8.5 L0.5 5.3 L5 5 Z" fill="#f0a030"/></svg>
<div style="left:1134px;top:0px;width:785px;height:969px;background:#171717;"></div>
<div style="left:1134px;top:969px;width:785px;height:4px;background:#2a3236;"></div>
<div style="left:1916px;top:0px;width:3px;height:969px;background:#1f2a30;"></div>
<div style="left:1134px;top:0px;width:782px;height:4px;background:#fafafa;"></div>
<svg style="left:31px;top:9px" width="12" height="13" viewBox="0 0 12 13"><path d="M6 0.8 L7.2 2.3 L9.2 1.8 L9.5 3.8 L11.3 4.8 L10.3 6.5 L11.3 8.2 L9.5 9.2 L9.2 11.2 L7.2 10.7 L6 12.2 L4.8 10.7 L2.8 11.2 L2.5 9.2 L0.7 8.2 L1.7 6.5 L0.7 4.8 L2.5 3.8 L2.8 1.8 L4.8 2.3 Z" fill="#6a9fd0"/><circle cx="6" cy="6.5" r="2.3" fill="#45494b"/></svg>
<div class="t " style="left:56px;top:10px;font-size:13px;color:#cfcfcf;letter-spacing:0.1px">main.dart</div>
<svg style="left:117px;top:12px" width="9" height="9" viewBox="0 0 9 9"><path d="M1 1 L8 8 M8 1 L1 8" stroke="#7d7d7d" stroke-width="1.2"/></svg>
<svg style="left:979px;top:9px" width="15" height="14" viewBox="0 0 15 14"><path d="M1 1 H14 V10 H5 L1 13.5 Z" fill="#a3a3a3"/><rect x="4" y="5" width="1.6" height="1.6" fill="#393b3d"/><rect x="7" y="5" width="1.6" height="1.6" fill="#393b3d"/><rect x="10" y="5" width="1.6" height="1.6" fill="#393b3d"/></svg>
<div style="left:1003px;top:9px;width:2px;height:16px;background:#5a5c5e;"></div>
<svg style="left:1013px;top:9px" width="13" height="15" viewBox="0 0 13 15"><path d="M1 1.5 H12 M1 13.5 H12 M6.5 2 V13" stroke="#aeaeae" stroke-width="1.3"/><path d="M3.5 5 L6.5 2 L9.5 5 M3.5 10 L6.5 13 L9.5 10" stroke="#aeaeae" stroke-width="1.3" fill="none"/></svg>
<svg style="left:1033px;top:9px" width="13" height="15" viewBox="0 0 13 15"><path d="M1 6 H12 M1 9 H12 M6.5 0.5 V5 M6.5 10 V14.5" stroke="#aeaeae" stroke-width="1.3"/><path d="M4 2.5 L6.5 5 L9 2.5 M4 12.5 L6.5 10 L9 12.5" stroke="#aeaeae" stroke-width="1.3" fill="none"/></svg>
<div style="left:1054px;top:9px;width:2px;height:16px;background:#5a5c5e;"></div>
<svg style="left:1062px;top:10px" width="22" height="13" viewBox="0 0 22 13"><path d="M6.5 0.5 L7.7 2 L9.7 1.5 L10 3.5 L11.8 4.5 L10.8 6.2 L11.8 7.9 L10 8.9 L9.7 10.9 L7.7 10.4 L6.5 11.9 L5.3 10.4 L3.3 10.9 L3 8.9 L1.2 7.9 L2.2 6.2 L1.2 4.5 L3 3.5 L3.3 1.5 L5.3 2 Z" fill="#aeaeae"/><circle cx="6.5" cy="6.2" r="1.6" fill="#393b3d"/><path d="M15 5.5 H20 L17.5 8.5 Z" fill="#aeaeae"/></svg>
<svg style="left:1090px;top:10px" width="14" height="13" viewBox="0 0 14 13"><path d="M0.5 4.5 H8" stroke="#aeaeae" stroke-width="1.3"/><path d="M5.5 2 L8.5 4.5 L5.5 7" stroke="#aeaeae" stroke-width="1.3" fill="none"/><rect x="10.3" y="0.8" width="2.6" height="11.4" fill="none" stroke="#aeaeae" stroke-width="1.2"/><rect x="10.3" y="0.8" width="2.6" height="5" fill="#aeaeae"/></svg>
<svg style="left:770px;top:34px" width="24" height="24" viewBox="0 0 24 24"><path d="M2.3 8.5 V3.5 Q2.3 2.3 3.5 2.3 H8.5 M15.5 2.3 H20.5 Q21.7 2.3 21.7 3.5 V8.5 M21.7 15.5 V20.5 Q21.7 21.7 20.5 21.7 H15.5 M8.5 21.7 H3.5 Q2.3 21.7 2.3 20.5 V15.5" stroke="#aeaeae" stroke-width="2.3" fill="none" stroke-linecap="round"/><circle cx="12" cy="12" r="3.3" fill="#aeaeae"/></svg>
<svg style="left:796px;top:34px" width="28" height="24" viewBox="0 0 28 24"><rect x="2.4" y="2.5" width="23.1" height="18.9" rx="2.2" stroke="#aeaeae" stroke-width="2.2" fill="none"/><path d="M14 6 L12 8.5 H16 Z M14 18 L12 15.5 H16 Z M6 12 L8.5 10 V14 Z M22 12 L19.5 10 V14 Z" fill="#aeaeae"/></svg>
<svg style="left:830px;top:33px" width="16" height="26" viewBox="0 0 16 26"><rect x="2.1" y="2.1" width="11.8" height="22.8" rx="2" stroke="#aeaeae" stroke-width="2.2" fill="none"/><path d="M2.5 9.8 H13.5 M2.5 17.2 H13.5" stroke="#aeaeae" stroke-width="2.2"/></svg>
<svg style="left:853px;top:40px" width="27" height="12" viewBox="0 0 27 12"><rect x="2.1" y="2.1" width="22.4" height="7.9" rx="3.5" stroke="#aeaeae" stroke-width="2.2" fill="none"/><path d="M10 2.5 V9.5 M17 2.5 V9.5" stroke="#aeaeae" stroke-width="2.2"/></svg>
<svg style="left:881px;top:34px" width="26" height="24" viewBox="0 0 26 24"><path d="M7 2.2 H2.2 V21.8 H7 M19 2.2 H23.8 V21.8 H19" stroke="#aeaeae" stroke-width="2.2" fill="none"/><rect x="6.8" y="15.5" width="2.6" height="2.4" fill="#aeaeae"/><rect x="11.7" y="15.5" width="2.6" height="2.4" fill="#aeaeae"/><rect x="16.6" y="15.5" width="2.6" height="2.4" fill="#aeaeae"/></svg>
<svg style="left:911px;top:36px" width="2" height="22" viewBox="0 0 2 22"><rect x="0" y="0" width="1.3" height="1.3" fill="#8a8a8a"/><rect x="0" y="3" width="1.3" height="1.3" fill="#8a8a8a"/><rect x="0" y="6" width="1.3" height="1.3" fill="#8a8a8a"/><rect x="0" y="9" width="1.3" height="1.3" fill="#8a8a8a"/><rect x="0" y="12" width="1.3" height="1.3" fill="#8a8a8a"/><rect x="0" y="15" width="1.3" height="1.3" fill="#8a8a8a"/><rect x="0" y="18" width="1.3" height="1.3" fill="#8a8a8a"/><rect x="0" y="21" width="1.3" height="1.3" fill="#8a8a8a"/></svg>
<svg style="left:945px;top:36px" width="2" height="22" viewBox="0 0 2 22"><rect x="0" y="0" width="1.3" height="1.3" fill="#8a8a8a"/><rect x="0" y="3" width="1.3" height="1.3" fill="#8a8a8a"/><rect x="0" y="6" width="1.3" height="1.3" fill="#8a8a8a"/><rect x="0" y="9" width="1.3" height="1.3" fill="#8a8a8a"/><rect x="0" y="12" width="1.3" height="1.3" fill="#8a8a8a"/><rect x="0" y="15" width="1.3" height="1.3" fill="#8a8a8a"/><rect x="0" y="18" width="1.3" height="1.3" fill="#8a8a8a"/><rect x="0" y="21" width="1.3" height="1.3" fill="#8a8a8a"/></svg>
<svg style="left:1007px;top:36px" width="2" height="22" viewBox="0 0 2 22"><rect x="0" y="0" width="1.3" height="1.3" fill="#8a8a8a"/><rect x="0" y="3" width="1.3" height="1.3" fill="#8a8a8a"/><rect x="0" y="6" width="1.3" height="1.3" fill="#8a8a8a"/><rect x="0" y="9" width="1.3" height="1.3" fill="#8a8a8a"/><rect x="0" y="12" width="1.3" height="1.3" fill="#8a8a8a"/><rect x="0" y="15" width="1.3" height="1.3" fill="#8a8a8a"/><rect x="0" y="18" width="1.3" height="1.3" fill="#8a8a8a"/><rect x="0" y="21" width="1.3" height="1.3" fill="#8a8a8a"/></svg>
<svg style="left:917px;top:37px" width="24" height="18" viewBox="0 0 24 18"><rect x="0.5" y="4" width="2.2" height="10" fill="#aeaeae"/><rect x="4.5" y="4" width="2.2" height="10" fill="#aeaeae"/><rect x="8.5" y="4" width="2.2" height="10" fill="#aeaeae"/><path d="M12.5 1 L23.5 9 L12.5 17 Z" fill="#aeaeae"/></svg>
<svg style="left:954px;top:41px" width="16" height="10" viewBox="0 0 16 10"><path d="M1.5 8.5 L8 2 L14.5 8.5" stroke="#aeaeae" stroke-width="2.2" fill="none"/></svg>
<svg style="left:982px;top:41px" width="16" height="10" viewBox="0 0 16 10"><path d="M1.5 1.5 L8 8 L14.5 1.5" stroke="#aeaeae" stroke-width="2.2" fill="none"/></svg>
<svg style="left:1012px;top:35px" width="24" height="23" viewBox="0 0 24 23"><path d="M2 5 V2 H21 V21 H2 V18" stroke="#606264" stroke-width="2" fill="none"/><path d="M17 11.5 H3 M8 6.5 L3 11.5 L8 16.5" stroke="#606264" stroke-width="2" fill="none"/></svg>
<svg style="left:1089px;top:37px" width="16" height="15" viewBox="0 0 16 15"><path d="M0.5 0.5 H15.5 L10 6.5 V14.5 L6 11.5 V6.5 Z" fill="#4db6e8"/><rect x="3" y="2" width="10" height="1" fill="#8fd0f0"/></svg>
<svg style="left:928px;top:476px" width="18" height="7" viewBox="0 0 18 7"><rect x="3.2" y="2" width="1.4" height="1.4" fill="#d0d0d0"/><rect x="2.2" y="4" width="1.4" height="1.4" fill="#d0d0d0"/><rect x="6.2" y="2" width="1.4" height="1.4" fill="#d0d0d0"/><rect x="5.2" y="4" width="1.4" height="1.4" fill="#d0d0d0"/><rect x="9.2" y="2" width="1.4" height="1.4" fill="#d0d0d0"/><rect x="8.2" y="4" width="1.4" height="1.4" fill="#d0d0d0"/><rect x="12.2" y="2" width="1.4" height="1.4" fill="#d0d0d0"/><rect x="11.2" y="4" width="1.4" height="1.4" fill="#d0d0d0"/><rect x="15.2" y="2" width="1.4" height="1.4" fill="#d0d0d0"/><rect x="14.2" y="4" width="1.4" height="1.4" fill="#d0d0d0"/></svg>
<div style="left:1134px;top:310px;width:782px;height:353px;background:#ffffff;"></div>
<div style="left:1134px;top:310px;width:782px;height:4px;background:#e6e6e6;"></div>
<div style="left:1134px;top:314px;width:486px;height:14px;background:#e8e8e8;"></div>
<div style="left:1137px;top:314px;width:143px;height:14px;background:#ffffff;"></div>
<div style="left:1134px;top:328px;width:486px;height:2px;background:#ffffff;"></div>
<div style="left:1134px;top:330px;width:486px;height:1px;background:#c9c9c9;"></div>
<div style="left:1134px;top:331px;width:40px;height:332px;background:#f0f0f0;"></div>
<div style="left:1173px;top:331px;width:1px;height:332px;background:#e4e4e4;"></div>
<div style="left:1134px;top:310px;width:1px;height:353px;background:#d8d8d8;"></div>
<div style="left:1594px;top:331px;width:1px;height:332px;background:#ececec;"></div>
<div style="left:1612px;top:332px;width:6px;height:7px;background:#e8d29a;"></div>
<div style="left:1611px;top:400px;width:9px;height:1px;background:#b8c890;"></div>
<svg style="left:1142px;top:316px" width="11" height="11" viewBox="0 0 11 11"><rect x="1" y="0" width="6" height="9" fill="#b9c4cc"/><circle cx="6.5" cy="7" r="3.5" fill="#2d8fd0"/></svg>
<div class="t " style="left:1154px;top:317px;font-size:8px;color:#c0623a;letter-spacing:0px">flutter_outline_live_preview.dart</div>
<div class="t " style="left:1269px;top:316px;font-size:10px;color:#c0c0c0;">×</div>
<div style="left:1134px;top:542px;width:40px;height:12px;background:#f8f2da;"></div>
<div style="left:1174px;top:542px;width:420px;height:12px;background:#fdf8e6;"></div>
<div class="t" style="left:1177.5px;top:333.00px;font-family:'Liberation Mono';font-size:8.63px;line-height:11.74px"><span style="color:#9c2e62">import</span> <span style="color:#3d3bd0">'package:flutter/material.dart'</span><span style="color:#9a9a9a">;</span></div>
<div class="t" style="left:1134px;width:15px;text-align:right;top:333.00px;font-family:'Liberation Mono';font-size:8.63px;line-height:11.74px;color:#a8a8a8">1</div>
<div class="t" style="left:1177.5px;top:344.74px;font-family:'Liberation Mono';font-size:8.63px;line-height:11.74px"></div>
<div class="t" style="left:1134px;width:15px;text-align:right;top:344.74px;font-family:'Liberation Mono';font-size:8.63px;line-height:11.74px;color:#a8a8a8">2</div>
<div class="t" style="left:1177.5px;top:356.48px;font-family:'Liberation Mono';font-size:8.63px;line-height:11.74px"><span style="color:#9c2e62">class</span> <span style="color:#2f9a5c">MyWidget</span> <span style="color:#9c2e62">extends</span> <span style="color:#2f9a5c">StatelessWidget</span> <span style="color:#222">{</span></div>
<div class="t" style="left:1134px;width:15px;text-align:right;top:356.48px;font-family:'Liberation Mono';font-size:8.63px;line-height:11.74px;color:#a8a8a8">3</div>
<div class="t" style="left:1177.5px;top:368.22px;font-family:'Liberation Mono';font-size:8.63px;line-height:11.74px">  <span style="color:#9c2e62">final</span> <span style="color:#2f9a5c">String</span> <span style="color:#3d3bd0">firstText</span><span style="color:#9a9a9a">;</span></div>
<div class="t" style="left:1134px;width:15px;text-align:right;top:368.22px;font-family:'Liberation Mono';font-size:8.63px;line-height:11.74px;color:#a8a8a8">4</div>
<div class="t" style="left:1177.5px;top:379.96px;font-family:'Liberation Mono';font-size:8.63px;line-height:11.74px"></div>
<div class="t" style="left:1134px;width:15px;text-align:right;top:379.96px;font-family:'Liberation Mono';font-size:8.63px;line-height:11.74px;color:#a8a8a8">5</div>
<div class="t" style="left:1177.5px;top:391.70px;font-family:'Liberation Mono';font-size:8.63px;line-height:11.74px">  <span style="color:#2f9a5c"><u style="text-decoration-color:#9c9">MyWidget</u></span><span style="color:#222">(</span><span style="color:#9c2e62">this</span><span style="color:#9a9a9a">.</span><span style="color:#3d3bd0">firstText</span><span style="color:#222">)</span><span style="color:#9a9a9a">;</span></div>
<div class="t" style="left:1134px;width:15px;text-align:right;top:391.70px;font-family:'Liberation Mono';font-size:8.63px;line-height:11.74px;color:#a8a8a8">6</div>
<div class="t" style="left:1177.5px;top:403.44px;font-family:'Liberation Mono';font-size:8.63px;line-height:11.74px"></div>
<div class="t" style="left:1134px;width:15px;text-align:right;top:403.44px;font-family:'Liberation Mono';font-size:8.63px;line-height:11.74px;color:#a8a8a8">7</div>
<div class="t" style="left:1177.5px;top:415.18px;font-family:'Liberation Mono';font-size:8.63px;line-height:11.74px">  <span style="color:#9c2e62">factory</span> <span style="color:#2f9a5c">MyWidget</span><span style="color:#9a9a9a">.</span><span style="color:#2fa090">forDesignTime</span><span style="color:#222">() {</span></div>
<div class="t" style="left:1134px;width:15px;text-align:right;top:415.18px;font-family:'Liberation Mono';font-size:8.63px;line-height:11.74px;color:#a8a8a8">8</div>
<div class="t" style="left:1177.5px;top:426.92px;font-family:'Liberation Mono';font-size:8.63px;line-height:11.74px">    <span style="color:#9c2e62">return</span> <span style="color:#9c2e62">new</span> <span style="color:#2f9a5c">MyWidget</span><span style="color:#222">(</span><span style="color:#3d3bd0">'AA'</span><span style="color:#222">)</span><span style="color:#9a9a9a">;</span></div>
<div class="t" style="left:1134px;width:15px;text-align:right;top:426.92px;font-family:'Liberation Mono';font-size:8.63px;line-height:11.74px;color:#a8a8a8">9</div>
<div class="t" style="left:1177.5px;top:438.66px;font-family:'Liberation Mono';font-size:8.63px;line-height:11.74px">  <span style="color:#222">}</span></div>
<div class="t" style="left:1134px;width:15px;text-align:right;top:438.66px;font-family:'Liberation Mono';font-size:8.63px;line-height:11.74px;color:#a8a8a8">10</div>
<div class="t" style="left:1177.5px;top:450.40px;font-family:'Liberation Mono';font-size:8.63px;line-height:11.74px"></div>
<div class="t" style="left:1134px;width:15px;text-align:right;top:450.40px;font-family:'Liberation Mono';font-size:8.63px;line-height:11.74px;color:#a8a8a8">11</div>
<div class="t" style="left:1177.5px;top:462.14px;font-family:'Liberation Mono';font-size:8.63px;line-height:11.74px">  <span style="color:#2f9a5c">@</span><i style="color:#3d3bd0">override</i></div>
<div class="t" style="left:1134px;width:15px;text-align:right;top:462.14px;font-family:'Liberation Mono';font-size:8.63px;line-height:11.74px;color:#a8a8a8">12</div>
<div class="t" style="left:1177.5px;top:473.88px;font-family:'Liberation Mono';font-size:8.63px;line-height:11.74px">  <span style="color:#2f9a5c">Widget</span> <span style="color:#3188c8">build</span><span style="color:#222">(</span><span style="color:#2f9a5c">BuildContext</span> <span style="color:#e3894a">context</span><span style="color:#222">) {</span></div>
<div class="t" style="left:1134px;width:15px;text-align:right;top:473.88px;font-family:'Liberation Mono';font-size:8.63px;line-height:11.74px;color:#a8a8a8">13</div>
<div class="t" style="left:1177.5px;top:485.62px;font-family:'Liberation Mono';font-size:8.63px;line-height:11.74px">    <span style="color:#9c2e62">return</span> <span style="color:#9c2e62">new</span> <span style="color:#2f9a5c">Column</span><span style="color:#222">(</span></div>
<div class="t" style="left:1134px;width:15px;text-align:right;top:485.62px;font-family:'Liberation Mono';font-size:8.63px;line-height:11.74px;color:#a8a8a8">14</div>
<div class="t" style="left:1177.5px;top:497.36px;font-family:'Liberation Mono';font-size:8.63px;line-height:11.74px">      <span style="color:#e3894a">crossAxisAlignment</span><span style="color:#9a9a9a">:</span> <span style="color:#2fa090">CrossAxisAlignment</span><span style="color:#9a9a9a">.</span><span style="color:#23349a">center</span><span style="color:#222">,</span></div>
<div class="t" style="left:1134px;width:15px;text-align:right;top:497.36px;font-family:'Liberation Mono';font-size:8.63px;line-height:11.74px;color:#a8a8a8">15</div>
<div class="t" style="left:1177.5px;top:509.10px;font-family:'Liberation Mono';font-size:8.63px;line-height:11.74px">      <span style="color:#e3894a">children</span><span style="color:#9a9a9a">:</span> <span style="color:#2f9a5c">&lt;Widget&gt;</span><span style="color:#222">[</span></div>
<div class="t" style="left:1134px;width:15px;text-align:right;top:509.10px;font-family:'Liberation Mono';font-size:8.63px;line-height:11.74px;color:#a8a8a8">16</div>
<div class="t" style="left:1177.5px;top:520.84px;font-family:'Liberation Mono';font-size:8.63px;line-height:11.74px">        <span style="color:#3188c8">buildText</span><span style="color:#222">(</span><span style="color:#3d3bd0">firstText</span><span style="color:#222">),</span></div>
<div class="t" style="left:1134px;width:15px;text-align:right;top:520.84px;font-family:'Liberation Mono';font-size:8.63px;line-height:11.74px;color:#a8a8a8">17</div>
<div class="t" style="left:1177.5px;top:532.58px;font-family:'Liberation Mono';font-size:8.63px;line-height:11.74px">        <span style="color:#3188c8">buildText</span><span style="color:#222">(</span><span style="color:#3d3bd0">'BBBB'</span><span style="color:#222">),</span></div>
<div class="t" style="left:1134px;width:15px;text-align:right;top:532.58px;font-family:'Liberation Mono';font-size:8.63px;line-height:11.74px;color:#a8a8a8">18</div>
<div class="t" style="left:1177.5px;top:544.32px;font-family:'Liberation Mono';font-size:8.63px;line-height:11.74px">        <span style="color:#3188c8">buildText</span><span style="color:#222">(</span><span style="color:#3d3bd0">'CCCCCC'</span><span style="color:#222">),</span></div>
<div class="t" style="left:1134px;width:15px;text-align:right;top:544.32px;font-family:'Liberation Mono';font-size:8.63px;line-height:11.74px;color:#a8a8a8">19</div>
<div class="t" style="left:1177.5px;top:556.06px;font-family:'Liberation Mono';font-size:8.63px;line-height:11.74px">        <span style="color:#3188c8">buildText</span><span style="color:#222">(</span><span style="color:#3d3bd0">'DDDDDDDD'</span><span style="color:#222">),</span></div>
<div class="t" style="left:1134px;width:15px;text-align:right;top:556.06px;font-family:'Liberation Mono';font-size:8.63px;line-height:11.74px;color:#a8a8a8">20</div>
<div class="t" style="left:1177.5px;top:567.80px;font-family:'Liberation Mono';font-size:8.63px;line-height:11.74px">      <span style="color:#222">],</span> <span style="color:#e0307a">// &lt;Widget&gt;[]</span></div>
<div class="t" style="left:1134px;width:15px;text-align:right;top:567.80px;font-family:'Liberation Mono';font-size:8.63px;line-height:11.74px;color:#a8a8a8">21</div>
<div class="t" style="left:1177.5px;top:579.54px;font-family:'Liberation Mono';font-size:8.63px;line-height:11.74px">    <span style="color:#222">)</span><span style="color:#9a9a9a">;</span> <span style="color:#e0307a">// Column</span></div>
<div class="t" style="left:1134px;width:15px;text-align:right;top:579.54px;font-family:'Liberation Mono';font-size:8.63px;line-height:11.74px;color:#a8a8a8">22</div>
<div class="t" style="left:1177.5px;top:591.28px;font-family:'Liberation Mono';font-size:8.63px;line-height:11.74px">  <span style="color:#222">}</span></div>
<div class="t" style="left:1134px;width:15px;text-align:right;top:591.28px;font-family:'Liberation Mono';font-size:8.63px;line-height:11.74px;color:#a8a8a8">23</div>
<div class="t" style="left:1177.5px;top:603.02px;font-family:'Liberation Mono';font-size:8.63px;line-height:11.74px"></div>
<div class="t" style="left:1134px;width:15px;text-align:right;top:603.02px;font-family:'Liberation Mono';font-size:8.63px;line-height:11.74px;color:#a8a8a8">24</div>
<div class="t" style="left:1177.5px;top:614.76px;font-family:'Liberation Mono';font-size:8.63px;line-height:11.74px">  <span style="color:#2f9a5c">Text</span> <span style="color:#3188c8">buildText</span><span style="color:#222">(</span><span style="color:#2f9a5c">String</span> <span style="color:#e3894a">text</span><span style="color:#222">) {</span></div>
<div class="t" style="left:1134px;width:15px;text-align:right;top:614.76px;font-family:'Liberation Mono';font-size:8.63px;line-height:11.74px;color:#a8a8a8">25</div>
<div class="t" style="left:1177.5px;top:626.50px;font-family:'Liberation Mono';font-size:8.63px;line-height:11.74px">    <span style="color:#9c2e62">return</span> <span style="color:#9c2e62">new</span> <span style="color:#2f9a5c">Text</span><span style="color:#222">(</span><span style="color:#e3894a">text</span><span style="color:#222">,</span> <span style="color:#e3894a">style</span><span style="color:#9a9a9a">:</span> <span style="color:#9c2e62">const</span> <span style="color:#2f9a5c">TextStyle</span><span style="color:#222">(</span><span style="color:#e3894a">fontSize</span><span style="color:#9a9a9a">:</span> <span style="color:#2f9a5c">24.0</span><span style="color:#222">));</span></div>
<div class="t" style="left:1134px;width:15px;text-align:right;top:626.50px;font-family:'Liberation Mono';font-size:8.63px;line-height:11.74px;color:#a8a8a8">26</div>
<div class="t" style="left:1177.5px;top:638.24px;font-family:'Liberation Mono';font-size:8.63px;line-height:11.74px">  <span style="color:#222">}</span></div>
<div class="t" style="left:1134px;width:15px;text-align:right;top:638.24px;font-family:'Liberation Mono';font-size:8.63px;line-height:11.74px;color:#a8a8a8">27</div>
<div class="t" style="left:1177.5px;top:649.98px;font-family:'Liberation Mono';font-size:8.63px;line-height:11.74px"><span style="color:#222">}</span></div>
<div class="t" style="left:1134px;width:15px;text-align:right;top:649.98px;font-family:'Liberation Mono';font-size:8.63px;line-height:11.74px;color:#a8a8a8">28</div>
<div style="left:1218px;top:543px;width:1px;height:10px;background:#000;"></div>
<svg style="left:1182px;top:540px" width="8" height="11" viewBox="0 0 8 11"><circle cx="4" cy="4" r="3.5" fill="#f0c040"/><rect x="2.5" y="7" width="3" height="3" fill="#999"/></svg>
<svg style="left:1152px;top:472px" width="12" height="10" viewBox="0 0 12 10"><circle cx="4" cy="6" r="3" fill="#4a8ab0"/><path d="M9 9 V2 M7.5 4 L9 1.5 L10.5 4" stroke="#d05050" stroke-width="1.2" fill="none"/></svg>
<div style="left:1169px;top:358.48px;width:7px;height:8px;background:#ffffff;border:1px solid #e2e2e2;border-radius:3px"></div>
<div style="left:1169px;top:417.18px;width:7px;height:8px;background:#ffffff;border:1px solid #e2e2e2;border-radius:3px"></div>
<div style="left:1169px;top:440.65999999999997px;width:7px;height:8px;background:#ffffff;border:1px solid #e2e2e2;border-radius:3px"></div>
<div style="left:1169px;top:475.88px;width:7px;height:8px;background:#ffffff;border:1px solid #e2e2e2;border-radius:3px"></div>
<div style="left:1169px;top:487.62px;width:7px;height:8px;background:#ffffff;border:1px solid #e2e2e2;border-radius:3px"></div>
<div style="left:1169px;top:581.54px;width:7px;height:8px;background:#ffffff;border:1px solid #e2e2e2;border-radius:3px"></div>
<div style="left:1169px;top:593.28px;width:7px;height:8px;background:#ffffff;border:1px solid #e2e2e2;border-radius:3px"></div>
<div style="left:1169px;top:616.76px;width:7px;height:8px;background:#ffffff;border:1px solid #e2e2e2;border-radius:3px"></div>
<div style="left:1169px;top:640.24px;width:7px;height:8px;background:#ffffff;border:1px solid #e2e2e2;border-radius:3px"></div>
<div style="left:1169px;top:651.98px;width:7px;height:8px;background:#ffffff;border:1px solid #e2e2e2;border-radius:3px"></div>
<div style="left:1189px;top:484px;width:1px;height:106px;background:#ececec;"></div>
<div style="left:1199px;top:496px;width:1px;height:82px;background:#ececec;"></div>
<div style="left:1210px;top:519px;width:1px;height:47px;background:#ececec;"></div>
<div style="left:1620px;top:314px;width:282px;height:349px;background:#ffffff;"></div>
<div style="left:1620px;top:314px;width:1px;height:349px;background:#c8c8c8;"></div>
<div style="left:1621px;top:314px;width:281px;height:14px;background:#e8e8e8;"></div>
<div style="left:1621px;top:328px;width:281px;height:21px;background:#ececec;"></div>
<div style="left:1621px;top:349px;width:281px;height:1px;background:#d0d0d0;"></div>
<div class="t " style="left:1624px;top:317px;font-size:8px;color:#727272;letter-spacing:0.1px">Flutter Outline</div>
<svg style="left:1815px;top:317px" width="12" height="10" viewBox="0 0 12 10"><path d="M0 0 H11 V7 H3 L0 10 Z" fill="#9a9a9a"/></svg>
<svg style="left:1838px;top:316px" width="10" height="11" viewBox="0 0 10 11"><path d="M1 1 H9 M1 10 H9 M5 1 V10 M3 3 L5 1 L7 3 M3 8 L5 10 L7 8" stroke="#7a7a7a" fill="none"/></svg>
<svg style="left:1852px;top:316px" width="10" height="11" viewBox="0 0 10 11"><path d="M1 5.5 H9 M5 0 V3.5 M5 7.5 V11 M3 2 L5 4 L7 2 M3 9 L5 7 L7 9" stroke="#7a7a7a" fill="none"/></svg>
<svg style="left:1870px;top:316px" width="14" height="10" viewBox="0 0 14 10"><circle cx="5" cy="5" r="4" fill="#7a7a7a"/><circle cx="5" cy="5" r="1.5" fill="#e8e8e8"/><path d="M10 4 H13 L11.5 6 Z" fill="#7a7a7a"/></svg>
<svg style="left:1887px;top:316px" width="10" height="10" viewBox="0 0 10 10"><path d="M0 4 H6 M4 2 L6 4 L4 6" stroke="#7a7a7a" fill="none"/><rect x="7.5" y="0.5" width="2" height="9" fill="#7a7a7a"/></svg>
<svg style="left:1623px;top:331px" width="230" height="16" viewBox="0 0 230 16"><path d="M1 5 V1 H5 M10 1 H14 V5 M14 11 V15 H10 M5 15 H1 V11" stroke="#6a6a6a" stroke-width="1.5" fill="none"/><circle cx="7.5" cy="8" r="1.8" fill="#6a6a6a"/><rect x="18.7" y="1.7" width="15" height="12.6" rx="1" stroke="#6a6a6a" stroke-width="1.4" fill="none"/><rect x="25.5" y="3.5" width="1.5" height="1.2" fill="#6a6a6a"/><rect x="25.5" y="11.3" width="1.5" height="1.2" fill="#6a6a6a"/><rect x="20.5" y="7.4" width="1.2" height="1.4" fill="#6a6a6a"/><rect x="31" y="7.4" width="1.2" height="1.4" fill="#6a6a6a"/><rect x="40" y="0.5" width="9" height="15" rx="1" stroke="#6a6a6a" stroke-width="1.5" fill="none"/><path d="M40 5.5 H49 M40 10.5 H49" stroke="#6a6a6a" stroke-width="1.5"/><rect x="56" y="5" width="14" height="6" rx="1.5" stroke="#6a6a6a" stroke-width="1.4" fill="none"/><path d="M60.7 5 V11 M65.3 5 V11" stroke="#6a6a6a" stroke-width="1.4"/><path d="M73.5 1 V15" stroke="#d8d8d8"/><rect x="77" y="5" width="1.5" height="6" fill="#6a6a6a"/><rect x="80" y="5" width="1.5" height="6" fill="#6a6a6a"/><rect x="83" y="5" width="1.5" height="6" fill="#6a6a6a"/><path d="M86 1.5 L93 8 L86 14.5 Z" fill="#6a6a6a"/><path d="M96.5 1 V15" stroke="#d8d8d8"/><path d="M103 10 L107.5 5.5 L112 10" stroke="#6a6a6a" stroke-width="1.5" fill="none"/><path d="M121 6 L125.5 10.5 L130 6" stroke="#6a6a6a" stroke-width="1.5" fill="none"/><path d="M137.5 1 V15" stroke="#d8d8d8"/><path d="M140 3 V1.5 H154 V14.5 H140 V13 M150 8 H141 M144 5 L141 8 L144 11" stroke="#b8b8b8" stroke-width="1.2" fill="none"/></svg>
<svg style="left:1888px;top:334px" width="11" height="10" viewBox="0 0 11 10"><path d="M0 0 H11 L7 4.5 V10 L4 7.5 V4.5 Z" fill="#2aa0d8"/></svg>
<div style="left:1621px;top:460.75px;width:281px;height:12.4px;background:#d4d4d4;"></div>
<svg style="left:1624px;top:353.6px" width="7" height="6" viewBox="0 0 7 6"><path d="M0.5 0 H6.5 L3.5 5.5 Z" fill="#9c9c9c"/></svg>
<div style="left:1635px;top:351.1px;width:10px;height:10px;border-radius:5px;background:#4cc0e0;color:#555;font:7px 'Liberation Sans';line-height:10px;text-align:center">C</div>
<div class="t" style="left:1647px;top:351.6px;font-size:9px;color:#333333;letter-spacing:0.15px">MyWidget</div>
<div style="left:1648px;top:363.5px;width:10px;height:10px;border-radius:5px;background:#f4a860;color:#555;font:7px 'Liberation Sans';line-height:10px;text-align:center">f</div>
<div class="t" style="left:1660px;top:364.0px;font-size:9px;color:#333333;letter-spacing:0.15px">firstText → String</div>
<div style="left:1648px;top:375.8px;width:10px;height:10px;border-radius:5px;background:#f4a0b8;color:#555;font:7px 'Liberation Sans';line-height:10px;text-align:center">m</div>
<div class="t" style="left:1660px;top:376.3px;font-size:9px;color:#333333;letter-spacing:0.15px">MyWidget(this.firstText)</div>
<svg style="left:1636px;top:390.7px" width="7" height="6" viewBox="0 0 7 6"><path d="M0.5 0 H6.5 L3.5 5.5 Z" fill="#9c9c9c"/></svg>
<div style="left:1648px;top:388.2px;width:10px;height:10px;border-radius:5px;background:#f4a0b8;color:#555;font:7px 'Liberation Sans';line-height:10px;text-align:center">m</div>
<div class="t" style="left:1660px;top:388.7px;font-size:9px;color:#333333;letter-spacing:0.15px">MyWidget.forDesignTime()</div>
<svg style="left:1662px;top:401.0px" width="7" height="9" viewBox="0 0 7 9"><path d="M4 0 H7 L2 5 L0.5 3.5 Z" fill="#3cc0f0"/><path d="M4 4 H7 L4.5 6.5 L7 9 H4 L1.5 6.5 Z" fill="#1e8fd0"/></svg>
<div style="left:1669px;top:400.5px;width:10px;height:10px;border-radius:5px;background:#4aa8d8;color:#555;font:7px 'Liberation Sans';line-height:10px;text-align:center">M</div>
<div class="t" style="left:1681px;top:401.0px;font-size:9px;color:#333333;letter-spacing:0.15px">MyWidget <span style="color:#aaa">firstText: 'AA'</span></div>
<svg style="left:1636px;top:415.4px" width="7" height="6" viewBox="0 0 7 6"><path d="M0.5 0 H6.5 L3.5 5.5 Z" fill="#9c9c9c"/></svg>
<div style="left:1648px;top:412.9px;width:10px;height:10px;border-radius:5px;background:#f4a0b8;color:#555;font:7px 'Liberation Sans';line-height:10px;text-align:center">m</div>
<div class="t" style="left:1660px;top:413.4px;font-size:9px;color:#333333;letter-spacing:0.15px"><b style="letter-spacing:0px">build(BuildContext context)</b> → Widget</div>
<svg style="left:1649px;top:427.7px" width="7" height="6" viewBox="0 0 7 6"><path d="M0.5 0 H6.5 L3.5 5.5 Z" fill="#9c9c9c"/></svg>
<svg style="left:1662px;top:425.7px" width="7" height="9" viewBox="0 0 7 9"><path d="M4 0 H7 L2 5 L0.5 3.5 Z" fill="#3cc0f0"/><path d="M4 4 H7 L4.5 6.5 L7 9 H4 L1.5 6.5 Z" fill="#1e8fd0"/></svg>
<div style="left:1669px;top:425.2px;width:10px;height:10px;border-radius:5px;background:#6cc8e0;color:#555;font:7px 'Liberation Sans';line-height:10px;text-align:center">C</div>
<div class="t" style="left:1681px;top:425.7px;font-size:9px;color:#333333;letter-spacing:0.15px">Column <span style="color:#aaa">crossAxisAlignment: CrossAxisAlignment.center</span></div>
<svg style="left:1675px;top:438.1px" width="7" height="9" viewBox="0 0 7 9"><path d="M4 0 H7 L2 5 L0.5 3.5 Z" fill="#3cc0f0"/><path d="M4 4 H7 L4.5 6.5 L7 9 H4 L1.5 6.5 Z" fill="#1e8fd0"/></svg>
<div style="left:1682px;top:437.6px;width:10px;height:10px;background:#f4fafd;border:1px solid #6ab0d8;color:#777;font:7px 'Liberation Sans';line-height:8px;text-align:center">T</div>
<div class="t" style="left:1694px;top:438.1px;font-size:9px;color:#333333;letter-spacing:0.15px">Text <span style="color:#aaa">buildText(...)</span></div>
<svg style="left:1675px;top:450.4px" width="7" height="9" viewBox="0 0 7 9"><path d="M4 0 H7 L2 5 L0.5 3.5 Z" fill="#3cc0f0"/><path d="M4 4 H7 L4.5 6.5 L7 9 H4 L1.5 6.5 Z" fill="#1e8fd0"/></svg>
<div style="left:1682px;top:449.9px;width:10px;height:10px;background:#f4fafd;border:1px solid #6ab0d8;color:#777;font:7px 'Liberation Sans';line-height:8px;text-align:center">T</div>
<div class="t" style="left:1694px;top:450.4px;font-size:9px;color:#333333;letter-spacing:0.15px">Text <span style="color:#aaa">buildText(...)</span></div>
<svg style="left:1675px;top:462.8px" width="7" height="9" viewBox="0 0 7 9"><path d="M4 0 H7 L2 5 L0.5 3.5 Z" fill="#3cc0f0"/><path d="M4 4 H7 L4.5 6.5 L7 9 H4 L1.5 6.5 Z" fill="#1e8fd0"/></svg>
<div style="left:1682px;top:462.2px;width:10px;height:10px;background:#f4fafd;border:1px solid #6ab0d8;color:#777;font:7px 'Liberation Sans';line-height:8px;text-align:center">T</div>
<div class="t" style="left:1694px;top:462.8px;font-size:9px;color:#333333;letter-spacing:0.15px">Text <span style="color:#333">buildText(...)</span></div>
<svg style="left:1675px;top:475.1px" width="7" height="9" viewBox="0 0 7 9"><path d="M4 0 H7 L2 5 L0.5 3.5 Z" fill="#3cc0f0"/><path d="M4 4 H7 L4.5 6.5 L7 9 H4 L1.5 6.5 Z" fill="#1e8fd0"/></svg>
<div style="left:1682px;top:474.6px;width:10px;height:10px;background:#f4fafd;border:1px solid #6ab0d8;color:#777;font:7px 'Liberation Sans';line-height:8px;text-align:center">T</div>
<div class="t" style="left:1694px;top:475.1px;font-size:9px;color:#333333;letter-spacing:0.15px">Text <span style="color:#aaa">buildText(...)</span></div>
<svg style="left:1636px;top:489.5px" width="7" height="6" viewBox="0 0 7 6"><path d="M0.5 0 H6.5 L3.5 5.5 Z" fill="#9c9c9c"/></svg>
<div style="left:1648px;top:487.0px;width:10px;height:10px;border-radius:5px;background:#f4a0b8;color:#555;font:7px 'Liberation Sans';line-height:10px;text-align:center">m</div>
<div class="t" style="left:1660px;top:487.5px;font-size:9px;color:#333333;letter-spacing:0.15px">buildText(String text) → Text</div>
<svg style="left:1662px;top:499.8px" width="7" height="9" viewBox="0 0 7 9"><path d="M4 0 H7 L2 5 L0.5 3.5 Z" fill="#3cc0f0"/><path d="M4 4 H7 L4.5 6.5 L7 9 H4 L1.5 6.5 Z" fill="#1e8fd0"/></svg>
<div style="left:1669px;top:499.3px;width:10px;height:10px;background:#f4fafd;border:1px solid #6ab0d8;color:#777;font:7px 'Liberation Sans';line-height:8px;text-align:center">T</div>
<div class="t" style="left:1681px;top:499.8px;font-size:9px;color:#e87070;letter-spacing:0.15px">Text <span style="color:#e87070">text, style: const TextStyle(fontSize: 24.0)</span></div>
<div style="left:1902px;top:310px;width:14px;height:353px;background:#e2e2e2;"></div>
<div style="left:1902px;top:310px;width:1px;height:353px;background:#cccccc;"></div>
<div style="left:1903px;top:314px;width:13px;height:76px;background:#c9c9c9;"></div>
<svg style="left:1906px;top:320.0px" width="7" height="9" viewBox="0 0 7 9"><path d="M4 0 H7 L2 5 L0.5 3.5 Z" fill="#3cc0f0"/><path d="M4 4 H7 L4.5 6.5 L7 9 H4 L1.5 6.5 Z" fill="#1e8fd0"/></svg>
<div class="t" style="left:1914px;top:331px;font-size:8px;color:#333;transform-origin:0 0;transform:rotate(90deg);letter-spacing:-0.1px">Flutter Outline</div>
<svg style="left:1906px;top:398.0px" width="7" height="9" viewBox="0 0 7 9"><path d="M4 0 H7 L2 5 L0.5 3.5 Z" fill="#3cc0f0"/><path d="M4 4 H7 L4.5 6.5 L7 9 H4 L1.5 6.5 Z" fill="#1e8fd0"/></svg>
<div class="t" style="left:1914px;top:410px;font-size:8px;color:#555;transform-origin:0 0;transform:rotate(90deg);letter-spacing:-0.1px">Flutter Inspector</div>
<div style="left:1621px;top:518px;width:281px;height:14px;background:#ffffff;"></div>
<div style="left:1623px;top:523px;width:262px;height:5px;background:#c8c8c8;border-radius:3px"></div>
<div style="left:1621px;top:531px;width:281px;height:3px;background:#e8e8e8;"></div>
<div style="left:1755px;top:533px;width:12px;height:1px;background:#b0b0b0;"></div>
<div style="left:1621px;top:534px;width:281px;height:13px;background:#e8e8e8;"></div>
<div class="t " style="left:1623px;top:537px;font-size:8px;color:#333;letter-spacing:0.2px">Preview: MyWidget</div>
<div style="left:1621px;top:547px;width:281px;height:116px;background:#a8f0fa;"></div>
<div style="left:1621px;top:547px;width:1px;height:116px;background:#90c8d8;"></div>
<div class="t " style="left:1623px;top:550px;font-size:9.5px;color:#335566;letter-spacing:0.2px">Column</div>
<div style="left:1746px;top:547px;width:31px;height:16px;background:#52efe2;border:1px solid #40c0b8"></div>
<div class="t " style="left:1750px;top:550px;font-size:9.5px;color:#225;letter-spacing:0.2px">Text</div>
<div style="left:1730px;top:563px;width:63px;height:15px;background:#d8d8d8;border:1px solid #b8b8b8"></div>
<div class="t " style="left:1734px;top:565px;font-size:9.5px;color:#333;letter-spacing:0.2px">Text</div>
<div style="left:1714px;top:578px;width:95px;height:16px;background:#58d8f8;border:2px solid #1e58e0"></div>
<div class="t " style="left:1718px;top:580px;font-size:9.5px;color:#225;letter-spacing:0.2px">Text</div>
<div style="left:1699px;top:594px;width:126px;height:16px;background:#8cf8c4;border:1px solid #70c8a0"></div>
<div class="t " style="left:1703px;top:596px;font-size:9.5px;color:#333;letter-spacing:0.2px">Text</div>
<div style="left:736px;top:449px;width:408px;height:511px;background:transparent;border:4px solid #cc1a1a"></div>
<div style="left:1597px;top:503px;width:323px;height:189px;background:transparent;border:4px solid #cc1a1a"></div></body></html>
